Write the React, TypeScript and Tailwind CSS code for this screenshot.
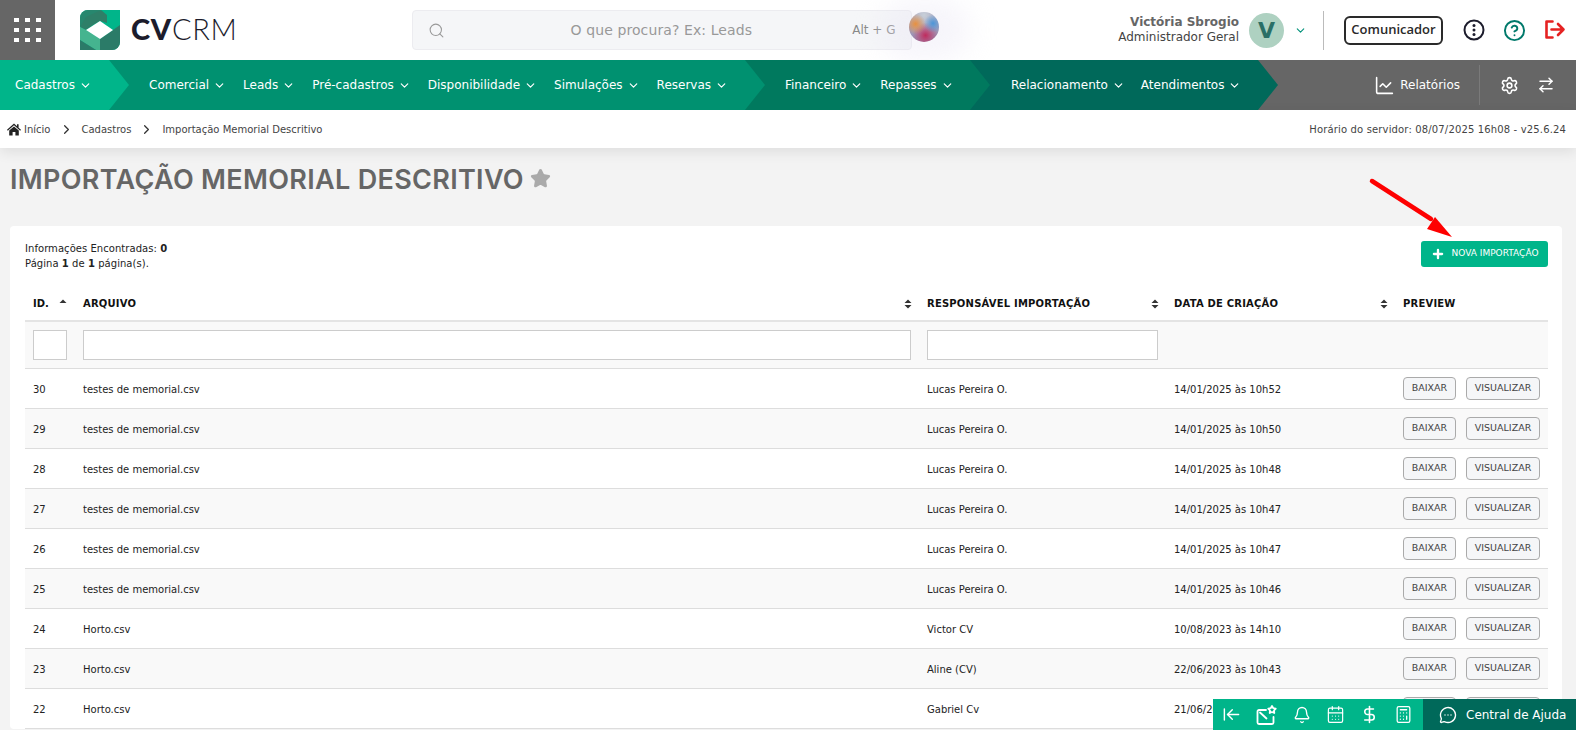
import React from "react";
import {
  ArrowLeftToLine,
  ArrowRightLeft,
  Bell,
  CalendarDays,
  Calculator,
  ChartLine,
  ChevronDown,
  ChevronRight,
  CircleHelp,
  DollarSign,
  MessageCircleMore,
  Plus,
  Search,
  Settings,
  Star,
} from "lucide-react";

const rows = [
  ["30", "testes de memorial.csv", "Lucas Pereira O.", "14/01/2025 às 10h52"],
  ["29", "testes de memorial.csv", "Lucas Pereira O.", "14/01/2025 às 10h50"],
  ["28", "testes de memorial.csv", "Lucas Pereira O.", "14/01/2025 às 10h48"],
  ["27", "testes de memorial.csv", "Lucas Pereira O.", "14/01/2025 às 10h47"],
  ["26", "testes de memorial.csv", "Lucas Pereira O.", "14/01/2025 às 10h47"],
  ["25", "testes de memorial.csv", "Lucas Pereira O.", "14/01/2025 às 10h46"],
  ["24", "Horto.csv", "Victor CV", "10/08/2023 às 14h10"],
  ["23", "Horto.csv", "Aline (CV)", "22/06/2023 às 10h43"],
  ["22", "Horto.csv", "Gabriel Cv", "21/06/2023 às 10h41"],
];

function NavItem({ label }: { label: string }) {
  return (
    <span className="flex items-center gap-[4px] text-[12px] text-white whitespace-nowrap">
      {label}
      <ChevronDown size={13} strokeWidth={2.2} />
    </span>
  );
}

function SortIcon() {
  return (
    <svg width="8" height="10" viewBox="0 0 8 10" className="shrink-0">
      <path d="M4 0.5 7.5 4H.5zM4 9.5 .5 6h7z" fill="#333" />
    </svg>
  );
}

function HeadCell({ label, sort = true }: { label: string; sort?: boolean }) {
  return (
    <th className="px-2 pb-[3px] text-left font-bold text-[10px] tracking-[0.2px] text-[#111] border-b-2 border-[#e4e4e4]">
      <div className="flex items-center justify-between -mr-px">
        <span>{label}</span>
        {sort && <SortIcon />}
      </div>
    </th>
  );
}

function Logo() {
  return (
    <div className="flex items-center gap-[11px] ml-[25px]">
      <svg width="40" height="40" viewBox="0 0 40 40">
        <path d="M8 0h32v32a8 8 0 0 1-8 8H0V8a8 8 0 0 1 8-8z" fill="#00b58a" />
        <path d="M0 8a8 8 0 0 1 8-8h13L6 10 0 17z" fill="#27876e" />
        <path d="M21 0l6 5v8l-7-2-7 4-7 5-6-3 6-10z" fill="#2e7f68" />
        <path d="M0 17l6 3 14 9v11h-4L0 30z" fill="#45b48f" />
        <path d="M0 30l16 10H0z" fill="#2b7b68" />
        <path d="M20 29l13-9 7-5v17a8 8 0 0 1-8 8H20z" fill="#2b7b68" />
        <path d="M20 11 33 20 20 29 6 20z" fill="#fff" />
      </svg>
      <span className="-mt-[3px] font-['Lato',sans-serif] text-[29px] leading-none text-[#1c1c2c] tracking-[0.7px]">
        <span className="font-black">CV</span>
        <span className="font-light">CRM</span>
      </span>
    </div>
  );
}

function MailStar() {
  return (
    <svg width="22" height="22" viewBox="0 0 22 22" fill="none" stroke="#fff" strokeWidth="1.8" strokeLinecap="round" strokeLinejoin="round">
      <path d="M10 6H3a1.5 1.5 0 0 0-1.5 1.5v11A1.5 1.5 0 0 0 3 20h13a1.5 1.5 0 0 0 1.5-1.5V13" />
      <path d="M4 8.5l6.5 6" />
      <path d="M16 2l1.3 2.2 2.4.5-1.7 1.8.3 2.5-2.3-1-2.3 1 .3-2.5-1.7-1.8 2.4-.5z" />
    </svg>
  );
}

function InfoDots() {
  return (
    <svg width="22" height="22" viewBox="0 0 22 22" className="ml-[20px]">
      <circle cx="11" cy="11" r="9.5" fill="none" stroke="#1c1c2c" strokeWidth="2" />
      <circle cx="11" cy="6.5" r="1.5" fill="#1c1c2c" />
      <circle cx="11" cy="11" r="1.5" fill="#1c1c2c" />
      <circle cx="11" cy="15.5" r="1.5" fill="#1c1c2c" />
    </svg>
  );
}

function LogoutIcon() {
  return (
    <svg width="22" height="22" viewBox="0 0 22 22" fill="none" stroke="#e52222" strokeWidth="2.6" strokeLinejoin="round" strokeLinecap="round" className="ml-[18px] mr-[10px]">
      <path d="M8.5 2.5H2.5v16h6" />
      <path d="M7.5 10.5h12M14 5l5.5 5.5L14 16" />
    </svg>
  );
}

function HomeIcon() {
  return (
    <svg width="14" height="13" viewBox="0 0 14 13" fill="#222">
      <path d="M7 .5 0 6.8l.8.9L7 2.2l6.2 5.5.8-.9-2.4-2.1V1.2h-1.6v2.1z" />
      <path d="M2.2 7.6 7 3.4l4.8 4.2V12.5H8.4V9H5.6v3.5H2.2z" />
    </svg>
  );
}

export default function App() {
  return (
    <div className="relative h-[730px] overflow-hidden bg-[#f3f3f3] font-['DejaVu_Sans',sans-serif] text-[10px] text-[#222]">
      {/* top bar */}
      <header className="relative flex h-[60px] items-center bg-white">
        <div className="flex h-[60px] w-[55px] items-center justify-center bg-[#666]">
          <div className="grid grid-cols-3 gap-x-[6px] gap-y-[6px]">
            {Array.from({ length: 9 }).map((_, i) => (
              <span key={i} className="h-[4px] w-[5px] bg-white" />
            ))}
          </div>
        </div>
        <Logo />
        <div className="ml-[174px] flex h-[40px] w-[500px] items-center rounded-[4px] border border-[#ececf0] bg-[#f5f6f8] pl-[15px] pr-[15px]">
          <Search size={17} strokeWidth={1.5} className="text-[#999]" />
          <span className="ml-[126px] text-[14px] tracking-[0.1px] text-[#999]">O que procura? Ex: Leads</span>
          <span className="ml-auto text-[12px] text-[#888]">Alt + G</span>
        </div>
        <div className="absolute left-[880px] top-0 h-[60px] w-[90px] rounded-full bg-[#e9e6f4] opacity-40 blur-[14px]" />
        <div className="absolute left-[909px] top-[12px] h-[30px] w-[30px] rounded-full bg-[radial-gradient(circle_at_22%_40%,#e8903f_0,transparent_35%),radial-gradient(circle_at_80%_38%,#4c95d8_0,transparent_30%),radial-gradient(circle_at_55%_78%,#c02c5e_0,transparent_45%),radial-gradient(circle_at_50%_10%,#c8cfd8_0,#8d7fa8_100%)]" />
        <div className="ml-auto flex items-center">
          <div className="text-right leading-[15px]">
            <div className="text-[12px] font-bold text-[#666]">Victória Sbrogio</div>
            <div className="text-[12px] text-[#444]">Administrador Geral</div>
          </div>
          <div className="ml-[10px] flex h-[35px] w-[35px] items-center justify-center rounded-full bg-[#aed1c1] text-[22px] font-bold text-[#2a6f66]">
            V
          </div>
          <ChevronDown size={13} className="ml-[10px] text-[#00917a]" />
          <div className="ml-[16px] h-[39px] w-px bg-[#bbb]" />
          <button className="ml-[20px] h-[29px] w-[99px] rounded-[6px] border-2 border-[#2a2a2a] font-['Open_Sans',sans-serif] text-[13px] font-semibold text-[#2a2a2a]">
            Comunicador
          </button>
          <InfoDots />
          <CircleHelp size={23} strokeWidth={2} className="ml-[18px] text-[#00796b]" />
          <LogoutIcon />
        </div>
      </header>

      {/* main menu */}
      <nav className="relative flex h-[50px] bg-[#666]">
        <div className="relative z-40 flex w-[129px] items-center bg-[#00b58a] pl-[15px] [clip-path:polygon(0_0,109px_0,100%_50%,109px_100%,0_100%)]">
          <NavItem label="Cadastros" />
        </div>
        <div className="relative z-30 -ml-[20px] flex w-[656px] items-center gap-[17px] bg-[#009170] pl-[40px] [clip-path:polygon(0_0,636px_0,100%_50%,636px_100%,0_100%)]">
          <NavItem label="Comercial" />
          <NavItem label="Leads" />
          <NavItem label="Pré-cadastros" />
          <NavItem label="Disponibilidade" />
          <NavItem label="Simulações" />
          <NavItem label="Reservas" />
        </div>
        <div className="relative z-20 -ml-[20px] flex w-[245px] items-center gap-[17px] bg-[#00795e] pl-[40px] [clip-path:polygon(0_0,225px_0,100%_50%,225px_100%,0_100%)]">
          <NavItem label="Financeiro" />
          <NavItem label="Repasses" />
        </div>
        <div className="relative z-10 -ml-[20px] flex w-[308px] items-center gap-[16px] bg-[#00695a] pl-[41px] [clip-path:polygon(0_0,288px_0,100%_50%,288px_100%,0_100%)]">
          <NavItem label="Relacionamento" />
          <NavItem label="Atendimentos" />
        </div>
        <div className="ml-auto flex items-center text-white">
          <ChartLine size={21} strokeWidth={1.8} />
          <span className="ml-[5px] text-[12px]">Relatórios</span>
          <div className="ml-[19px] h-[40px] w-px bg-[#7a7a7a]" />
          <Settings size={19} strokeWidth={2} className="ml-[20px]" />
          <ArrowRightLeft size={18} strokeWidth={2} className="ml-[18px] mr-[21px]" />
        </div>
      </nav>

      {/* breadcrumb */}
      <div className="relative flex h-[38px] items-center bg-white pl-[7px] pr-[10px] shadow-[0_4px_14px_rgba(0,0,0,0.09)] text-[10px] text-[#444]">
        <HomeIcon />
        <span className="ml-[3px]">Início</span>
        <ChevronRight size={15} strokeWidth={2} className="ml-[9px] text-[#333]" />
        <span className="ml-[7px]">Cadastros</span>
        <ChevronRight size={15} strokeWidth={2} className="ml-[8px] text-[#333]" />
        <span className="ml-[8px]">Importação Memorial Descritivo</span>
        <span className="ml-auto tracking-[0.15px]">Horário do servidor: 08/07/2025 16h08 - v25.6.24</span>
      </div>

      {/* title */}
      <div className="flex h-[78px] items-start pl-[10px] pt-[14px]">
        <h1 className="font-['Inter',sans-serif] text-[27px] font-semibold leading-[36px] tracking-[0.32px] text-[#666]">
          IMPORTAÇÃO MEMORIAL DESCRITIVO
        </h1>
        <Star size={21} fill="#aaa" className="ml-[6px] mt-[6px] text-[#aaa]" />
      </div>

      {/* card */}
      <section className="mx-[10px] w-[1552px] rounded-[4px] bg-white px-[15px] pt-[15px]">
        <div className="flex h-[49px] items-start justify-between">
          <div className="leading-[15px] text-[#222]">
            <div className="tracking-[0.05px]">
              Informações Encontradas: <b>0</b>
            </div>
            <div className="tracking-[0.05px]">
              Página <b>1</b> de <b>1</b> página(s).
            </div>
          </div>
          <button className="-mr-px flex h-[26px] w-[127px] items-center justify-center gap-[7px] rounded-[3px] bg-[#00b58a] text-[9px] text-white">
            <Plus size={14} strokeWidth={4} />
            NOVA IMPORTAÇÃO
          </button>
        </div>
        <table className="w-[1523px] table-fixed border-collapse">
          <colgroup>
            <col className="w-[50px]" />
            <col className="w-[844px]" />
            <col className="w-[247px]" />
            <col className="w-[229px]" />
            <col className="w-[153px]" />
          </colgroup>
          <thead>
            <tr className="h-[31px]">
              <th className="border-b-2 border-[#e4e4e4] px-2 pb-[3px] text-left text-[10px] font-bold text-[#111]">
                <div className="flex items-center justify-between">
                  <span>ID.</span>
                  <svg width="8" height="5" viewBox="0 0 8 5" className="mb-[5px]">
                    <path d="M4 .5 7.5 4H.5z" fill="#333" />
                  </svg>
                </div>
              </th>
              <HeadCell label="ARQUIVO" />
              <HeadCell label="RESPONSÁVEL IMPORTAÇÃO" />
              <HeadCell label="DATA DE CRIAÇÃO" />
              <HeadCell label="PREVIEW" sort={false} />
            </tr>
          </thead>
          <tbody>
            <tr className="h-[47px] border-b border-[#ddd] bg-[#f9f9f9]">
              <td className="px-2">
                <input className="block h-[30px] w-full border border-[#ccc] bg-white" />
              </td>
              <td className="px-2">
                <input className="block h-[30px] w-full border border-[#ccc] bg-white" />
              </td>
              <td className="px-2">
                <input className="block h-[30px] w-full border border-[#ccc] bg-white" />
              </td>
              <td />
              <td />
            </tr>
            {rows.map((r, i) => (
              <tr key={r[0]} className={`h-[40px] border-b border-[#ddd] ${i % 2 === 1 ? "bg-[#f9f9f9]" : "bg-white"}`}>
                <td className="px-2 pt-[2px]">{r[0]}</td>
                <td className="px-2 pt-[2px]">{r[1]}</td>
                <td className="px-2 pt-[2px]">{r[2]}</td>
                <td className="px-2 pt-[2px]">{r[3]}</td>
                <td className="px-2">
                  <div className="flex gap-[10px]">
                    <button className="h-[23px] w-[53px] rounded-[4px] border border-[#aaa] bg-[#f5f6f8] text-[9.5px] text-[#444]">
                      BAIXAR
                    </button>
                    <button className="h-[23px] w-[74px] rounded-[4px] border border-[#aaa] bg-[#f5f6f8] text-[9.5px] text-[#444]">
                      VISUALIZAR
                    </button>
                  </div>
                </td>
              </tr>
            ))}
          </tbody>
        </table>
      </section>

      {/* annotation arrow */}
      <svg className="absolute left-[1365px] top-[175px]" width="95" height="70" viewBox="0 0 95 70">
        <path d="M7 6 66 44" stroke="#fe0000" strokeWidth="4.5" strokeLinecap="round" />
        <path d="M87 62 62 54 70 42z" fill="#fe0000" />
      </svg>

      {/* bottom bar */}
      <div className="absolute bottom-0 right-0 flex h-[31px] w-[363px] text-white">
        <div className="flex w-[210px] items-center gap-[15px] bg-[#00b58a] pl-[9px]">
          <ArrowLeftToLine size={19} strokeWidth={1.8} />
          <MailStar />
          <Bell size={18} strokeWidth={1.8} />
          <CalendarDays size={19} strokeWidth={1.5} />
          <DollarSign size={19} strokeWidth={2} />
          <Calculator size={19} strokeWidth={1.6} />
        </div>
        <div className="flex flex-1 items-center gap-[9px] bg-[#00695a] pl-[16px] text-[12px]">
          <MessageCircleMore size={18} strokeWidth={1.8} />
          Central de Ajuda
        </div>
      </div>
    </div>
  );
}
